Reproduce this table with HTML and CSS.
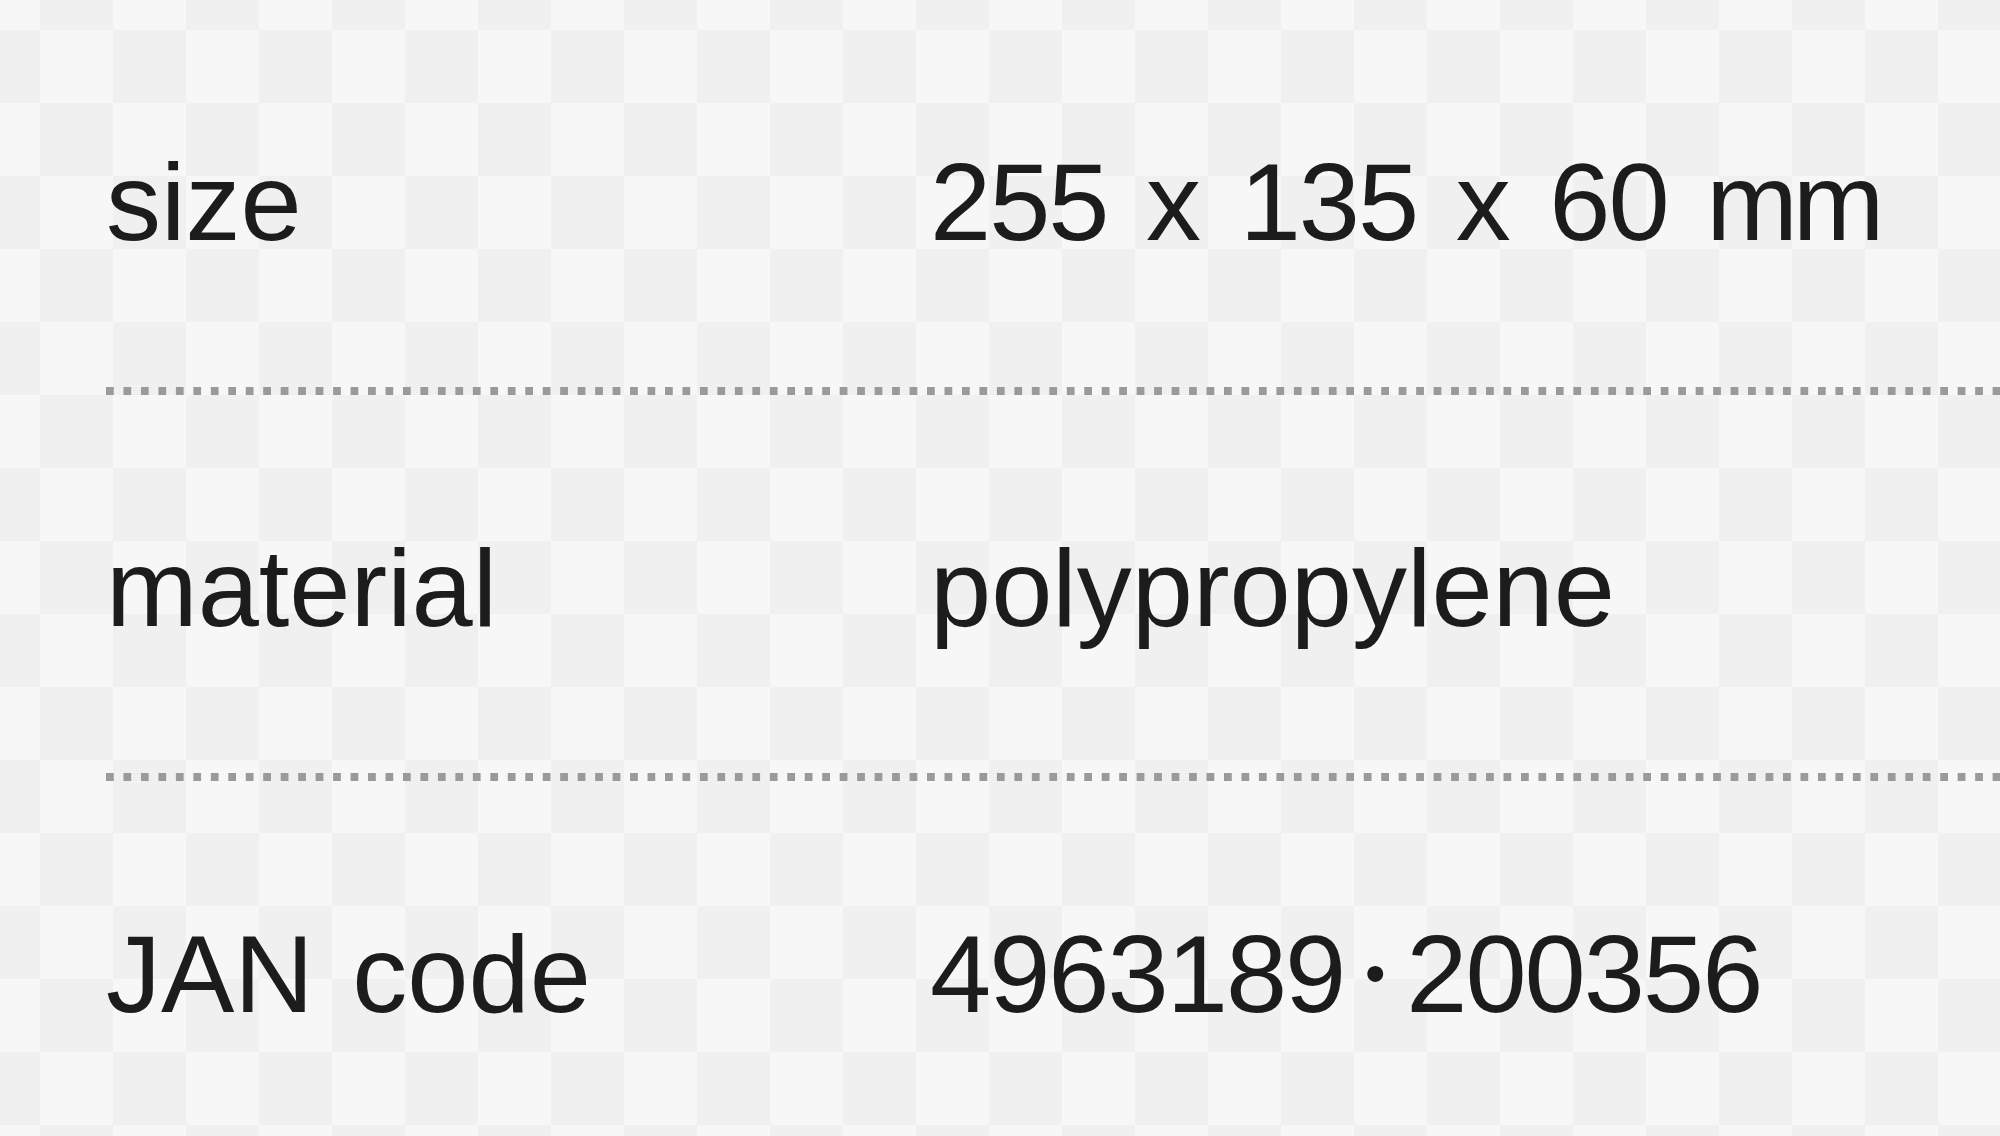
FILE: index.html
```html
<!DOCTYPE html>
<html lang="en">
<head>
  <meta charset="UTF-8">
  <meta name="viewport" content="width=device-width, initial-scale=1.0">
  <title>Spec</title>
  <link rel="stylesheet" href="styles.css">
</head>
<body>
  <div class="spec">
    <div class="row">
      <div class="label">size</div>
      <div class="value"><span class="num">255</span> x <span class="num">135</span> x <span class="num">60</span> <span class="unit">mm</span></div>
    </div>
    <div class="row">
      <div class="label">material</div>
      <div class="value">polypropylene</div>
    </div>
    <div class="row">
      <div class="label">JAN code</div>
      <div class="value"><span class="num">4963189</span><span class="dot">・</span><span class="num">200356</span></div>
    </div>
  </div>
</body>
</html>
```

FILE: styles.css
```css
html, body {
  margin: 0;
  height: 100%;
}
body {
  font-family: "Liberation Sans", Arial, sans-serif;
  color: #1c1c1c;
  background-color: #f7f7f7;
  background-image: conic-gradient(#f0f0f0 25%, transparent 0 50%, #f0f0f0 0 75%, transparent 0);
  background-size: 146px 146px;
  background-position: 40px 30px;
  overflow: hidden;
}
.spec {
  padding: 9px 0 0 106px;
}
.row {
  display: flex;
  height: 378px;
  padding-bottom: 8px;
  background-image: linear-gradient(to right, #9a9a9a 8px, transparent 8px);
  background-size: 17.47px 8px;
  background-repeat: repeat-x;
  background-position: 0 bottom;
  font-size: 110px;
  line-height: 126px;
  word-spacing: 8px;
}
.label {
  width: 824px;
  padding-top: 130px;
}
.value {
  padding-top: 130px;
}
.num {
  letter-spacing: -2px;
}
.unit {
  letter-spacing: -5px;
}
.dot {
  font-family: "Noto Sans CJK JP", sans-serif;
  font-weight: 700;
  font-size: 62px;
  line-height: 0;
  vertical-align: 14px;
}
```
